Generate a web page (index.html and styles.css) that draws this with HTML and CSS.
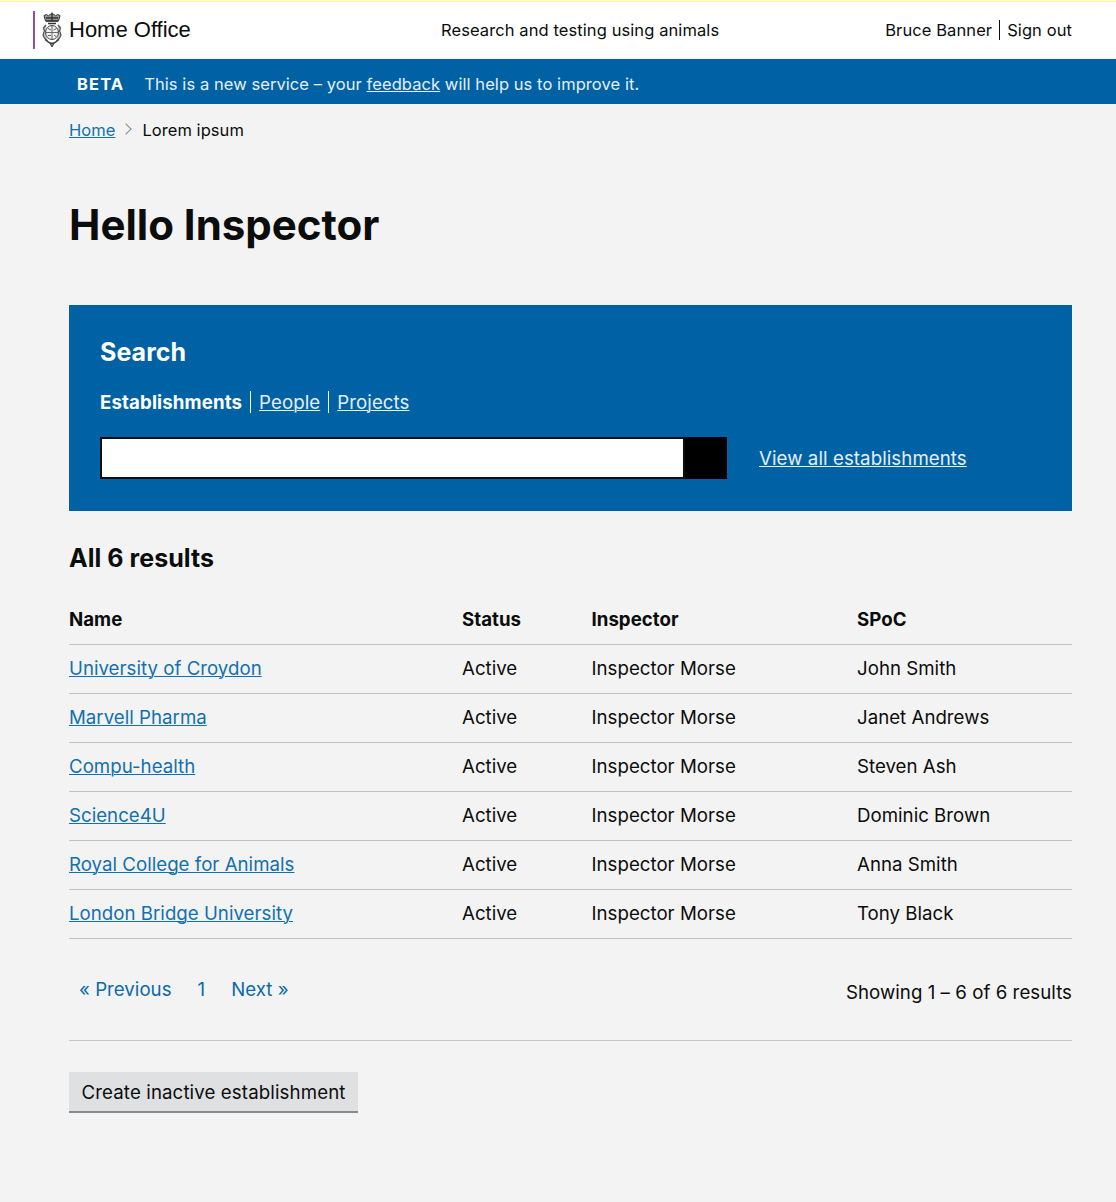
FILE: index.html
```html
<!DOCTYPE html>
<html lang="en">
<head>
<meta charset="utf-8">
<title>Research and testing using animals</title>
<link rel="stylesheet" href="styles.css">
</head>
<body>
<header class="site-header">
  <div class="brand">
    <svg class="crest" width="20" height="36" viewBox="0 0 20 36" fill="none" stroke="#333" stroke-width="1" aria-hidden="true">
      <path d="M2 3.500l2.500-1 2 1.500L8.500 2h3l2 2 2-1.500 2.500 1-1.500 5.500h-13z" fill="#999"/>
      <path d="M10 .5v8M4 6h12M4 9h12M6 11.500h8" stroke-width="1.300"/>
      <path d="M4 13l-2.500 3 1 3-1.500 4 1.500 3 3 3M16 13l2.500 3-1 3 1.500 4-1.500 3-3 3" fill="#ccc" stroke="#555" stroke-width="1.300"/>
      <ellipse cx="10" cy="20.500" rx="6.500" ry="7" fill="#eee" stroke="#444"/>
      <path d="M10 14v13M4 20.500h12M6 16.500l3 1.500M11.500 18l3-1.500M6 23.500h3M12 23l2 1.500" stroke="#666"/>
      <path d="M3 27.500l4 3 3 1 3-1 4-3" stroke="#444" stroke-width="1.500"/>
      <path d="M8 31.500l2 3.500 2-3.500z" fill="#777" stroke="#444"/>
    </svg>
    <span class="brand-name">Home Office</span>
  </div>
  <div class="service-name">Research and testing using animals</div>
  <div class="account"><span>Bruce Banner</span><i class="bar"></i><a href="#">Sign out</a></div>
</header>
<div class="phase-banner">
  <strong>BETA</strong>
  <span>This is a new service – your <a href="#">feedback</a> will help us to improve it.</span>
</div>
<main>
  <nav class="breadcrumbs"><a class="link" href="#">Home</a><i class="chevron"></i><span>Lorem ipsum</span></nav>
  <h1>Hello Inspector</h1>
  <section class="search">
    <h2>Search</h2>
    <div class="tabs"><strong>Establishments</strong><i class="bar"></i><a href="#">People</a><i class="bar"></i><a href="#">Projects</a></div>
    <div class="search-row">
      <div class="field"><input type="text" aria-label="Search"><button aria-label="Submit search"></button></div>
      <a href="#">View all establishments</a>
    </div>
  </section>
  <h2 class="results-title">All 6 results</h2>
  <table>
    <thead><tr><th class="c-name">Name</th><th class="c-status">Status</th><th class="c-inspector">Inspector</th><th>SPoC</th></tr></thead>
    <tbody>
      <tr><td><a class="link" href="#">University of Croydon</a></td><td>Active</td><td>Inspector Morse</td><td>John Smith</td></tr>
      <tr><td><a class="link" href="#">Marvell Pharma</a></td><td>Active</td><td>Inspector Morse</td><td>Janet Andrews</td></tr>
      <tr><td><a class="link" href="#">Compu-health</a></td><td>Active</td><td>Inspector Morse</td><td>Steven Ash</td></tr>
      <tr><td><a class="link" href="#">Science4U</a></td><td>Active</td><td>Inspector Morse</td><td>Dominic Brown</td></tr>
      <tr><td><a class="link" href="#">Royal College for Animals</a></td><td>Active</td><td>Inspector Morse</td><td>Anna Smith</td></tr>
      <tr><td><a class="link" href="#">London Bridge University</a></td><td>Active</td><td>Inspector Morse</td><td>Tony Black</td></tr>
    </tbody>
  </table>
  <div class="pagination">
    <nav class="pages"><a href="#">« Previous</a><a href="#">1</a><a href="#">Next »</a></nav>
    <span class="showing">Showing 1 – 6 of 6 results</span>
  </div>
  <button class="secondary">Create inactive establishment</button>
</main>
</body>
</html>
```
FILE: styles.css
```css
* { box-sizing: border-box; }
body {
  margin: 0;
  min-height: 1202px;
  background: #f3f3f3;
  color: #0b0c0c;
  font: 18.670px/24px Inter, "Liberation Sans", sans-serif;
  letter-spacing: .02px;
}
a { color: inherit; text-underline-offset: 1px; text-decoration-thickness: 1px; }
h1, h2 { margin: 0; }
.link { color: #1170b0; }
.bar { width: 1px; height: 22px; background: currentColor; }

.site-header {
  display: grid;
  grid-template-columns: 408px 1fr auto;
  align-items: center;
  height: 59px;
  padding: 0 44px 0 33px;
  border-top: 1px solid #fff;
  box-shadow: inset 0 1px #ffff80;
  background: #fff;
  font-size: 16.500px;
  letter-spacing: .09px;
}
.site-header a { text-decoration: none; }
.brand { display: flex; align-items: center; height: 38px; padding-left: 7px; border-left: 2px solid #8f4bab; }
.brand-name { margin-left: 7px; font: 22px/26px "Liberation Sans", Arial, sans-serif; letter-spacing: 0; }
.account { display: flex; justify-content: flex-end; align-items: center; }
.account .bar { height: 20px; margin: 0 7px; }

.phase-banner {
  display: flex;
  align-items: center;
  gap: 20px;
  height: 45px;
  padding: 5px 77px 0;
  background: #0062a5;
  color: #e5eff6;
  font-size: 16.500px;
  letter-spacing: .07px;
}
.phase-banner strong { color: #fff; letter-spacing: 1.100px; }

main { padding: 14px 44px 0 69px; }
.breadcrumbs { display: flex; align-items: center; font-size: 16.500px; letter-spacing: .05px; }
.chevron { width: 8px; height: 8px; margin: 0 12px 2px 7px; border: solid #888; border-width: 1px 1px 0 0; transform: rotate(45deg); }
h1 { margin-top: 59px; font-size: 42px; line-height: 48px; letter-spacing: 0; }

.search { height: 206px; margin-top: 56px; padding: 32px 31px; background: #0062a5; color: #fff; letter-spacing: .08px; }
h2 { font-size: 25px; line-height: 30px; letter-spacing: .05px; }
.tabs { display: flex; align-items: center; height: 24px; margin-top: 23px; }
.tabs strong { letter-spacing: .12px; }
.tabs strong, .tabs a, .search-row a { padding-top: 2px; }
.tabs .bar { margin: 0 8px; }
.tabs a, .search-row a { color: #e5eff6; }
.search-row { display: flex; align-items: center; gap: 32px; margin-top: 23px; }
.field { display: flex; width: 627px; height: 42px; }
.field input { flex: 1; border: 2px solid #0b0c0c; background: #fff; padding: 0 5px; }
.field button { width: 42px; border: 0; padding: 0; background: #000; }

.results-title { margin-top: 32px; }
table { width: 100%; margin-top: 22px; border-collapse: collapse; table-layout: fixed; }
th, td { height: 49px; padding: 0; border-bottom: 1px solid #bfc1c3; text-align: left; vertical-align: middle; }
th { padding-top: 2px; }
.c-name { width: 393px; }
.c-status { width: 129.500px; }
.c-inspector { width: 265.500px; }

.pagination { display: flex; justify-content: space-between; height: 102px; padding: 39px 0 0 10px; border-bottom: 1px solid #c5c7c9; }
.pages { display: flex; gap: 26px; color: #0b69ab; }
.pages a { text-decoration: none; }
.showing { padding-top: 3px; letter-spacing: .05px; }
.secondary { display: block; width: 289px; height: 41px; margin-top: 31px; padding: 4px 0 0; border: 0; border-bottom: 2px solid #898b8d; background: #dee0e2; color: #0b0c0c; font: inherit; letter-spacing: .12px; }
```
